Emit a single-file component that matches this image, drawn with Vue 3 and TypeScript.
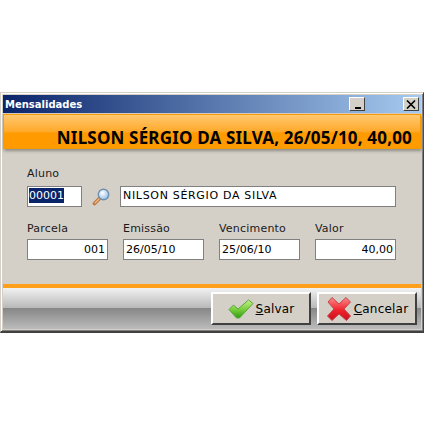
<script setup lang="ts">
const fields = [
  { label: 'Parcela', value: '001', right: true },
  { label: 'Emissão', value: '26/05/10', right: false },
  { label: 'Vencimento', value: '25/06/10', right: false },
  { label: 'Valor', value: '40,00', right: true },
]
</script>

<template>
  <div class="page">
    <div class="window">
      <div class="titlebar">
        <span class="title">Mensalidades</span>
        <button class="win-btn min"><i></i></button>
        <button class="win-btn close">
          <svg width="10" height="9" viewBox="0 0 10 9">
            <path d="M1 0.5 L9 8.5 M9 0.5 L1 8.5" stroke="#000" stroke-width="1.6" fill="none" />
          </svg>
        </button>
      </div>
      <div class="banner">NILSON SÉRGIO DA SILVA, 26/05/10, 40,00</div>
      <div class="form">
        <label class="lbl">Aluno</label>
        <div class="student">
          <div class="input code"><span class="selected">00001</span></div>
          <svg class="lens" width="18" height="18" viewBox="0 0 18 18">
            <defs>
              <radialGradient id="glass" cx="0.4" cy="0.35" r="0.7">
                <stop offset="0" stop-color="#ffffff" />
                <stop offset="1" stop-color="#8fbce8" />
              </radialGradient>
            </defs>
            <path d="M7.5 10.5 L2.5 15.5" stroke="#b9743f" stroke-width="3.6" stroke-linecap="round" />
            <path d="M7.5 10.5 L3 15" stroke="#f7b57c" stroke-width="1.4" stroke-linecap="round" />
            <circle cx="11.5" cy="6.5" r="5.2" fill="url(#glass)" stroke="#6d8fb0" stroke-width="1.4" />
          </svg>
          <div class="input name">NILSON SÉRGIO DA SILVA</div>
        </div>
        <div class="fields">
          <div v-for="f in fields" :key="f.label" class="field">
            <label class="lbl">{{ f.label }}</label>
            <div class="input value" :class="{ right: f.right }">{{ f.value }}</div>
          </div>
        </div>
      </div>
      <div class="footer">
        <button class="btn">
          <svg width="26" height="20" viewBox="0 0 26 20">
            <defs>
              <linearGradient id="ok" x1="0" y1="0" x2="0" y2="1">
                <stop offset="0" stop-color="#c8f08e" />
                <stop offset="0.55" stop-color="#74cc3a" />
                <stop offset="1" stop-color="#2f9a14" />
              </linearGradient>
            </defs>
            <path d="M1 10.5 L5.5 6 L10 10 L20.5 1 L25 4.5 L11.5 19 L8.5 19 Z" fill="url(#ok)" stroke="#5aa838" stroke-width="1" stroke-linejoin="round" />
          </svg>
          <span class="wide"><u>S</u>alvar</span>
        </button>
        <button class="btn">
          <svg width="26" height="26" viewBox="0 0 26 26">
            <defs>
              <linearGradient id="no" x1="0" y1="0" x2="0" y2="1">
                <stop offset="0" stop-color="#ff8a8a" />
                <stop offset="0.55" stop-color="#f0222c" />
                <stop offset="1" stop-color="#c8101c" />
              </linearGradient>
            </defs>
            <path d="M2 6 L6 1.5 L13 8 L20 1.5 L24.5 6 L18 13 L24.5 20 L20.5 24.5 L13 18 L6 24.5 L1.5 20 L8 13 Z" fill="url(#no)" stroke="#c2444a" stroke-width="1" stroke-linejoin="round" />
          </svg>
          <span class="wide"><u>C</u>ancelar</span>
        </button>
      </div>
    </div>
  </div>
</template>

<style>
html,
body {
  background: #fff;
}
</style>

<style scoped>
.page {
  width: 424px;
  height: 424px;
  padding-top: 92px;
  box-sizing: border-box;
  font-family: "DejaVu Sans", sans-serif;
  font-size: 11px;
  color: #000;
}

.window {
  width: 424px;
  height: 241px;
  box-sizing: border-box;
  background: #d4d0c8;
  border-style: solid;
  border-width: 1px 1px 2px 1px;
  border-color: #d4d0c8 #404040 #404040 #d4d0c8;
  box-shadow: inset 1px 1px 0 #fff, inset -1px -1px 0 #808080;
  padding: 2px;
  display: flex;
  flex-direction: column;
}

.titlebar {
  height: 18px;
  flex: none;
  display: flex;
  align-items: center;
  padding: 0 2px;
  background: linear-gradient(90deg, #0a246a, #a6caf0);
  color: #fff;
}

.title {
  flex: 1;
  font-size: 10px;
  font-weight: bold;
}

.win-btn {
  width: 16px;
  height: 14px;
  padding: 0;
  display: flex;
  align-items: center;
  justify-content: center;
  background: #d4d0c8;
  border: 1px solid;
  border-color: #fff #404040 #404040 #fff;
}

.win-btn.min {
  align-items: flex-end;
  margin-right: 38px;
  padding-bottom: 1px;
  padding-left: 1px;
}

.win-btn.min i {
  display: block;
  width: 6px;
  height: 2px;
  background: #000;
}

.banner {
  height: 35px;
  flex: none;
  margin-top: 1px;
  box-sizing: border-box;
  border: 1px solid #f79a08;
  padding: 12px 8px 0 0;
  text-align: right;
  font-family: "Noto Sans", sans-serif;
  font-size: 17px;
  letter-spacing: 0.18px;
  line-height: 22px;
  font-weight: bold;
  white-space: nowrap;
  background: linear-gradient(180deg, #ffc870 0%, #ffa92a 50%, #ff9a00 55%, #ff9a00 100%);
  box-shadow: 1px 2px 3px #8f8c85;
}

.form {
  flex: 1;
  padding: 17px 0 0 24px;
}

.lbl {
  display: block;
  height: 15px;
  line-height: 15px;
  margin-bottom: 5px;
  color: #1a1a1a;
  letter-spacing: 0.2px;
}

.student {
  display: flex;
  align-items: center;
  height: 21px;
}

.input {
  box-sizing: border-box;
  height: 21px;
  background: #fff;
  border: 1px solid #808080;
  line-height: 17px;
  padding: 0 2px;
  white-space: nowrap;
}

.input.value {
  line-height: 20px;
}

.input.right {
  text-align: right;
}

.input.code {
  width: 55px;
  padding: 0 1px;
}

.selected {
  background: #0a246a;
  color: #fff;
  display: inline-block;
  line-height: 15px;
}

.lens {
  margin: 0 10px;
  flex: none;
}

.input.name {
  width: 276px;
  letter-spacing: 0.68px;
}

.fields {
  display: grid;
  grid-template-columns: repeat(4, 81px);
  column-gap: 15px;
  margin-top: 14px;
}

.field .lbl {
  margin-bottom: 3px;
}

.footer {
  height: 45px;
  flex: none;
  box-sizing: border-box;
  border-top: 4px solid #ff9f1c;
  display: flex;
  justify-content: flex-end;
  align-items: flex-start;
  gap: 6px;
  padding: 4px 4px 0 0;
  background: linear-gradient(180deg, #f2f2f2 0%, #b8b8b8 49%, #868686 49%, #bcbcbc 100%);
}

.btn {
  width: 100px;
  height: 33px;
  box-sizing: border-box;
  display: flex;
  align-items: center;
  justify-content: center;
  gap: 2px;
  padding: 0;
  background: #d4d0c8;
  border: 2px solid;
  border-color: #fff #404040 #404040 #fff;
  font-family: "DejaVu Sans", sans-serif;
  font-size: 12px;
  color: #000;
}

.wide {
  letter-spacing: 0.2px;
}
</style>
